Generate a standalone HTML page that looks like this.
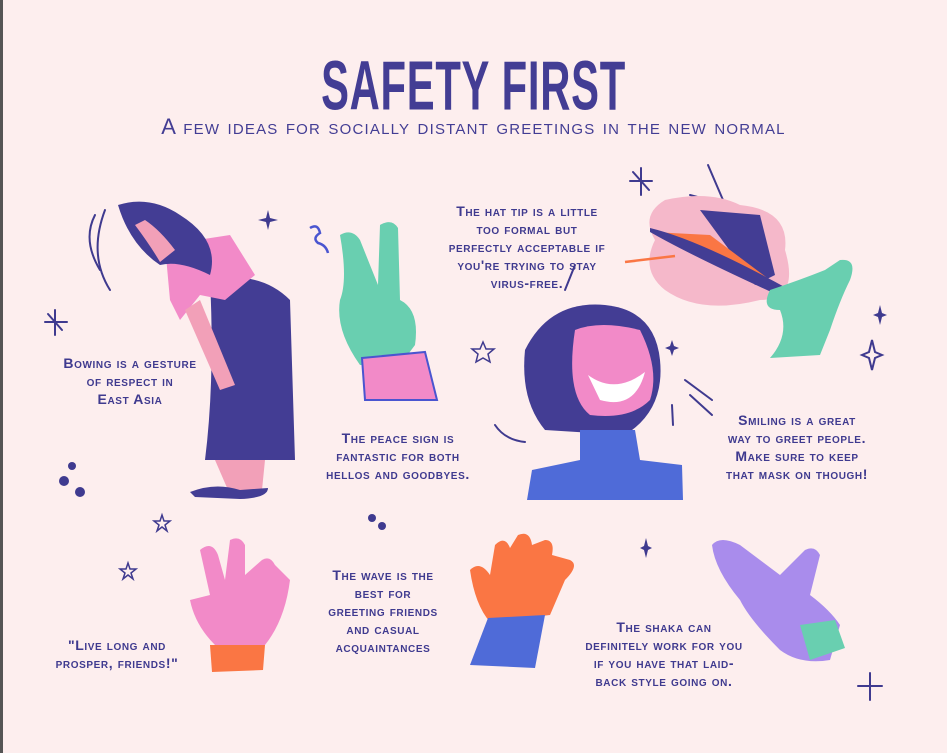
<!DOCTYPE html>
<html><head><meta charset="utf-8"><style>
html,body{margin:0;padding:0}
body{width:947px;height:753px;background:#fdeeee;position:relative;overflow:hidden;font-family:"Liberation Sans",sans-serif;color:#3f3a8f}
.edge{position:absolute;left:0;top:0;width:3px;height:753px;background:#555}
.t{position:absolute;text-align:center;font-variant:small-caps;font-size:14px;line-height:18px;letter-spacing:0.6px;font-weight:bold}
h1{position:absolute;left:0;width:947px;top:46px;margin:0;text-align:center;font-family:"Liberation Sans Narrow","Liberation Sans",sans-serif;font-weight:bold;font-size:58px;letter-spacing:1px;color:#433d94;transform:scale(0.72,1.2);transform-origin:50% 0}
.sub{position:absolute;left:0;width:947px;top:114px;text-align:center;font-variant:small-caps;font-size:22px;letter-spacing:1.2px;color:#433d94}
svg{position:absolute;left:0;top:0}
</style></head><body>
<div class="edge"></div>
<h1>SAFETY FIRST</h1>
<div class="sub">A few ideas for socially distant greetings in the new normal</div>
<svg width="947" height="753">
<g fill="none" stroke="#3f3a8f" stroke-width="2" stroke-linecap="round">
<path d="M95 215 Q82 240 100 270"/><path d="M105 210 Q88 255 110 290"/>
<path d="M55 310 L55 335 M45 322 L67 322 M48 314 L62 330"/>
<path d="M641 168 L641 195 M630 181 L652 181 M633 172 L649 190"/>
<path d="M870 673 L870 700 M858 686 L882 686"/>
<path d="M495 425 Q505 440 525 442"/><path d="M685 380 L712 400 M690 395 L712 415 M672 405 L673 425"/>
<path d="M708 165 L723 200 M690 195 L720 203"/>
<path d="M575 265 L565 290"/>
</g>
<g fill="#3f3a8f">
<path d="M268 210 l2 8 8 2 -8 2 -2 8 -2 -8 -8 -2 8 -2z"/>
<path d="M880 305 l2 8 5 2 -5 2 -2 8 -2 -8 -5 -2 5 -2z"/>
<path d="M872 340 l3 12 7 3 -7 3 -3 12 -3 -12 -7 -3 7 -3z" fill="none" stroke="#3f3a8f" stroke-width="2"/>
<path d="M672 340 l2 6 5 2 -5 2 -2 6 -2 -6 -5 -2 5 -2z"/>
<path d="M646 538 l2 8 4 2 -4 2 -2 8 -2 -8 -4 -2 4 -2z"/>
<circle cx="72" cy="466" r="4"/><circle cx="64" cy="481" r="5"/><circle cx="80" cy="492" r="5"/>
<circle cx="372" cy="518" r="4"/><circle cx="382" cy="526" r="4"/>
</g>
<g fill="none" stroke="#3f3a8f" stroke-width="1.5">
<path d="M483 342 l3 7 8 0 -6 5 2 8 -7 -4 -7 4 2 -8 -6 -5 8 0z"/>
<path d="M162 515 l2 6 6 0 -5 4 2 6 -5 -4 -5 4 2 -6 -5 -4 6 0z"/>
<path d="M128 563 l2 6 6 0 -5 4 2 6 -5 -4 -5 4 2 -6 -5 -4 6 0z"/>
</g>
<path d="M210 280 Q260 270 290 300 L295 460 L205 460 Q215 380 210 280z" fill="#433d94"/>
<path d="M165 245 L230 235 L255 275 L225 300 L200 295 L180 320 L170 300z" fill="#f28ac8"/>
<path d="M118 205 Q150 195 180 215 Q220 240 210 275 Q180 260 160 265 Q130 245 118 205z" fill="#433d94"/>
<path d="M135 225 Q150 245 160 262 L175 250 Q160 230 145 220z" fill="#f2a0b8"/>
<path d="M185 310 L200 300 L235 385 L220 390z" fill="#f2a0b8"/>
<path d="M215 460 L265 460 L262 490 L228 490z" fill="#f2a0b8"/>
<path d="M190 492 Q215 482 240 490 L268 488 Q268 498 240 499 L195 497z" fill="#433d94"/>
<path d="M340 235 Q352 228 360 240 L378 285 L380 225 Q392 218 398 228 L400 300 Q420 310 415 345 L400 365 L360 365 Q335 330 340 300 Q348 280 340 235z" fill="#69cfb0"/>
<path d="M362 358 L425 352 L437 400 L365 400z" fill="#f28ac8" stroke="#4a55d0" stroke-width="2"/>
<path d="M310 228 q8 -5 10 5 q-8 5 -2 10 q8 2 10 10" stroke="#4a55d0" stroke-width="2.5" fill="none"/>
<path d="M665 200 Q710 190 740 205 Q790 210 785 250 Q800 300 760 300 Q700 315 665 290 Q640 270 655 240 Q640 215 665 200z" fill="#f5b8ca"/>
<path d="M700 210 L760 215 L775 275 L755 285z" fill="#433d94"/>
<path d="M652 232 L710 235 L770 280 L750 282z" fill="#fa7644"/>
<path d="M650 228 Q700 240 790 290 L780 296 Q690 255 650 232z" fill="#433d94"/>
<path d="M625 262 L675 256" stroke="#fa7644" stroke-width="2.5"/>
<path d="M770 290 Q800 280 825 270 L840 260 Q858 258 850 280 Q840 300 830 330 L820 355 L770 358 Q790 335 780 310 Q760 310 770 290z" fill="#69cfb0"/>
<path d="M525 350 Q550 300 605 305 Q655 310 660 360 Q665 410 625 435 L545 430 Q520 400 525 350z" fill="#433d94"/>
<path d="M575 330 Q600 320 640 330 Q660 370 650 400 Q630 420 590 415 Q565 395 575 330z" fill="#f28ac8"/>
<path d="M588 375 Q615 395 645 372 Q635 410 600 400z" fill="#fff"/>
<path d="M580 430 L635 430 L640 460 L682 465 L683 500 L527 500 L532 470 L580 460z" fill="#4f6bd8"/>
<path d="M210 595 L200 550 Q212 540 218 555 L225 580 L230 540 Q240 535 245 545 L245 575 L262 560 Q270 555 275 565 L290 580 Q285 620 265 645 L215 645 Q195 625 190 600z" fill="#f28ac8"/>
<path d="M210 645 L265 645 L263 670 L212 672z" fill="#fa7644"/>
<path d="M470 570 Q480 560 490 575 L495 545 Q505 535 510 548 L518 535 Q530 530 532 545 L545 540 Q555 540 552 555 L570 560 Q580 565 565 580 L550 615 L490 622 Q475 605 470 570z" fill="#fa7644"/>
<path d="M488 618 L545 615 L535 668 L470 665z" fill="#4f6bd8"/>
<path d="M712 545 Q720 535 740 545 L780 575 L805 550 Q815 545 820 555 L810 595 Q830 610 840 625 L830 660 Q800 665 780 650 Q750 620 740 600 Q715 570 712 545z" fill="#a98cec"/>
<path d="M800 625 L835 620 L845 648 L810 660z" fill="#69cfb0"/>
</svg>
<div class="t" style="left:45px;top:354px;width:170px">Bowing is a gesture<br>of respect in<br>East Asia</div>
<div class="t" style="left:422px;top:202px;width:210px">The hat tip is a little<br>too formal but<br>perfectly acceptable if<br>you're trying to stay<br>virus-free.</div>
<div class="t" style="left:308px;top:429px;width:180px">The peace sign is<br>fantastic for both<br>hellos and goodbyes.</div>
<div class="t" style="left:702px;top:411px;width:190px">Smiling is a great<br>way to greet people.<br>Make sure to keep<br>that mask on though!</div>
<div class="t" style="left:37px;top:636px;width:160px">"Live long and<br>prosper, friends!"</div>
<div class="t" style="left:303px;top:566px;width:160px">The wave  is the<br>best for<br>greeting friends<br>and casual<br>acquaintances</div>
<div class="t" style="left:559px;top:618px;width:210px">The shaka can<br>definitely work for you<br>if you have that laid-<br>back style going on.</div>
</body></html>
